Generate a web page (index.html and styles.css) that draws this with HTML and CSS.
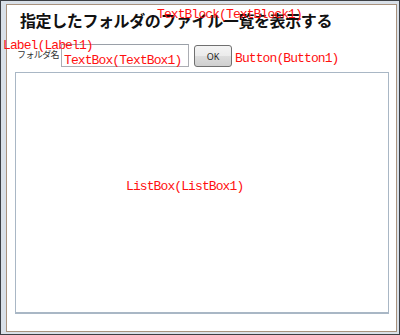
FILE: index.html
```html
<!DOCTYPE html>
<html lang="ja">
<head>
<meta charset="utf-8">
<title>フォルダ一覧</title>
<link rel="stylesheet" href="styles.css">
</head>
<body>
<div class="window">
  <div class="client">
    <h1 class="title">指定したフォルダのファイル一覧を表示する</h1>
    <div class="row">
      <span class="label">フォルダ名</span>
      <div class="textbox"></div>
      <button class="button" type="button">OK</button>
    </div>
    <div class="listbox"></div>
  </div>
  <div class="note note-textblock">TextBlock(TextBlock1)</div>
  <div class="note note-label">Label(Label1)</div>
  <div class="note note-textbox">TextBox(TextBox1)</div>
  <div class="note note-button">Button(Button1)</div>
  <div class="note note-listbox">ListBox(ListBox1)</div>
</div>
</body>
</html>
```

FILE: styles.css
```css
html, body {
  margin: 0;
  padding: 0;
}

body {
  width: 400px;
  height: 335px;
  overflow: hidden;
  font-family: "Noto Sans CJK JP", "Noto Sans", sans-serif;
}

.window {
  position: relative;
  box-sizing: border-box;
  width: 400px;
  height: 335px;
  border: 1px solid #3c3f44;
  background: #d9e0e8;
  padding: 3px 2px 2px 5px;
  display: flex;
}

.client {
  flex: 1;
  border: 1px solid #a8927e;
  background: #ffffff;
  padding: 5px 5px 0 8px;
  display: flex;
  flex-direction: column;
}

.title {
  margin: 0 0 14px 5px;
  font-size: 16px;
  line-height: 20px;
  font-weight: bold;
  letter-spacing: -0.4px;
  color: #111;
}

.row {
  display: flex;
  align-items: flex-start;
  height: 23px;
  margin-left: 2px;
}

.label {
  width: 44px;
  padding-top: 5px;
  font-size: 9px;
  line-height: 12px;
  letter-spacing: -0.6px;
  color: #333;
  white-space: nowrap;
}

.textbox {
  box-sizing: border-box;
  width: 128px;
  height: 23px;
  border: 1px solid #abadb3;
  border-top-color: #9aa0a8;
  background: #fff;
}

.button {
  box-sizing: border-box;
  width: 38px;
  height: 22px;
  margin: 1px 0 0 5px;
  padding: 0;
  border: 1px solid #707070;
  border-radius: 3px;
  background: linear-gradient(#f4f4f4 0%, #ebebeb 50%, #dddddd 51%, #cfcfcf 100%);
  font-family: "Noto Sans", sans-serif;
  font-size: 9px;
  color: #222;
}

.listbox {
  box-sizing: border-box;
  width: 374px;
  height: 242px;
  margin-top: 5px;
  border: 1px solid #a9b7c5;
  border-bottom-width: 2px;
  background: #fff;
}

.note {
  position: absolute;
  font-family: "Liberation Mono", monospace;
  font-size: 13px;
  line-height: 15px;
  letter-spacing: -0.9px;
  color: #ff1010;
  white-space: nowrap;
}

.note-textblock { left: 156px; top: 6px; }
.note-label { left: 2px; top: 37px; }
.note-textbox { left: 63px; top: 52px; }
.note-button { left: 234px; top: 50px; }
.note-listbox { left: 125px; top: 178px; }
```
